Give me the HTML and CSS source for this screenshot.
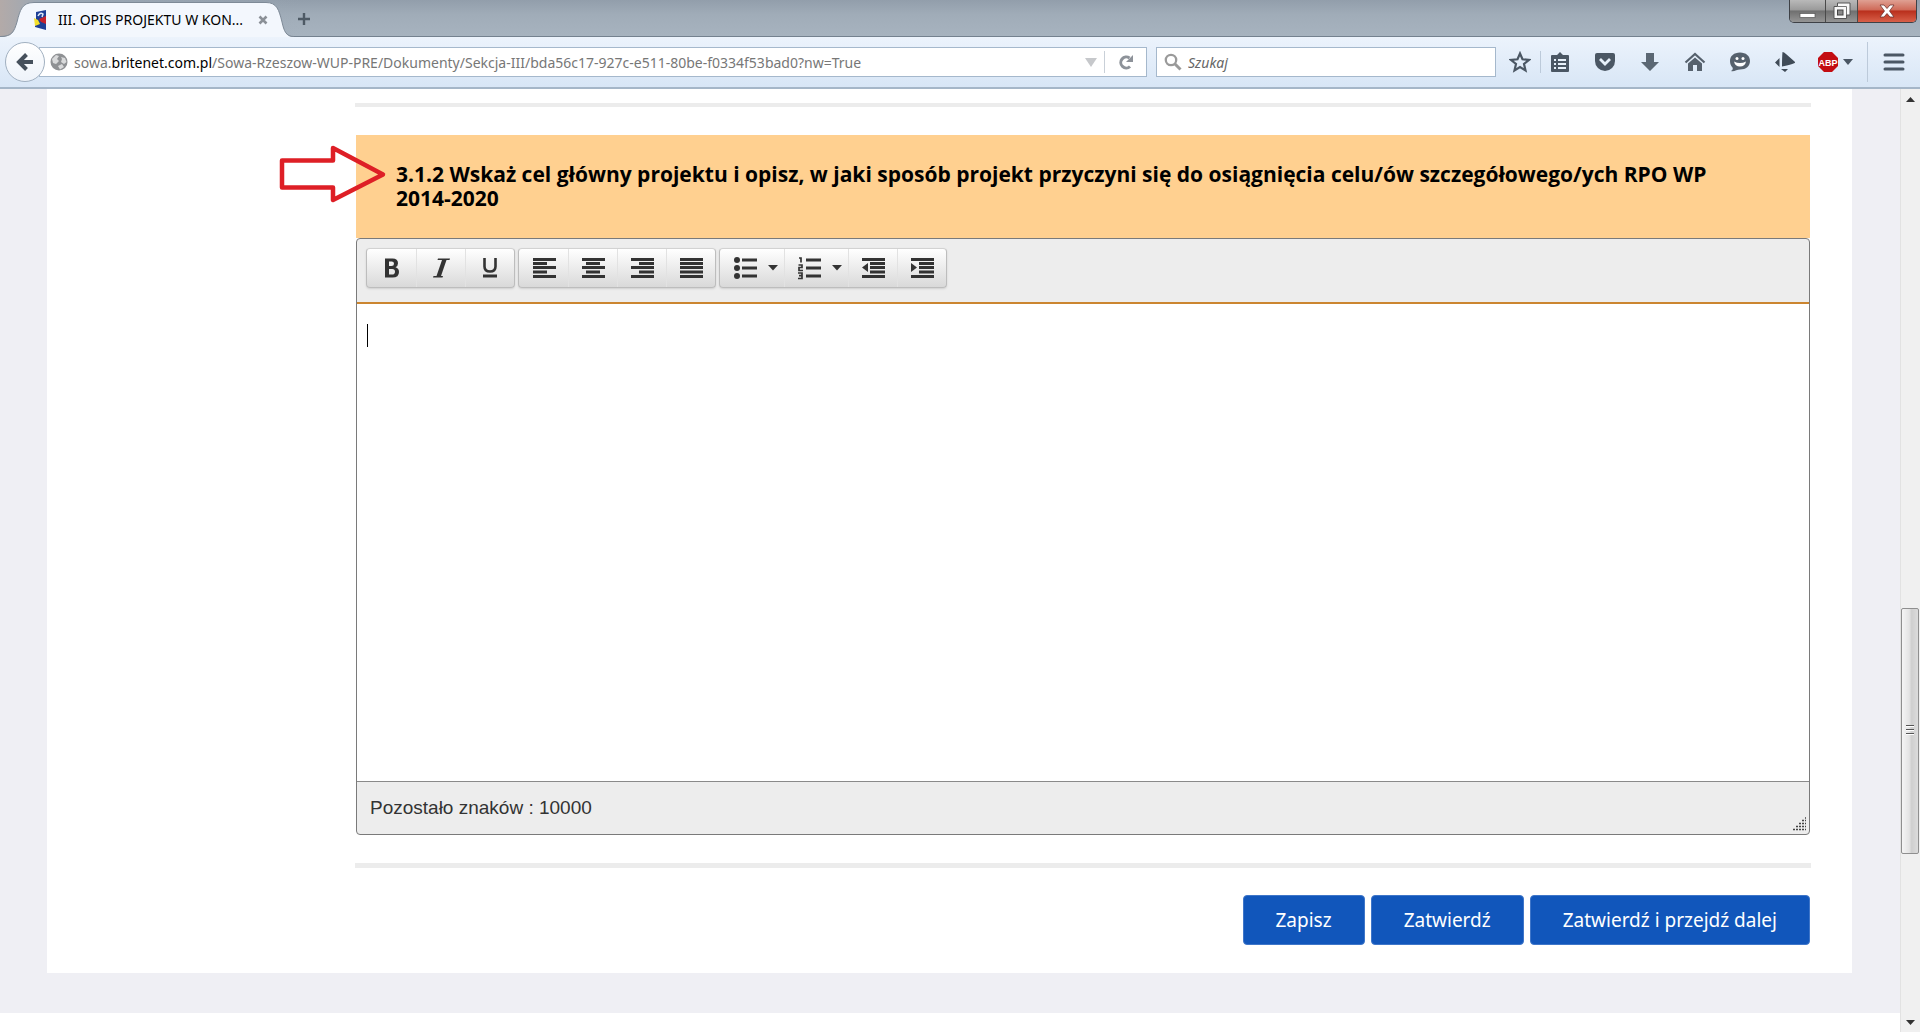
FILE: index.html
```html
<!DOCTYPE html>
<html lang="pl">
<head>
<meta charset="utf-8">
<title>III. OPIS PROJEKTU W KONTEKŚCIE</title>
<link rel="stylesheet" href="styles.css">
</head>
<body>
<header class="browser">
  <div class="titlebar">
    <div class="tab">
      <svg class="tab-shape" viewBox="0 0 286 37" aria-hidden="true"><path class="tab-fill" d="M0 37C12 37 14 32 17 22C20 10 22 2.500 34 2.500H266C277 2.500 279 10 282 22C284 31 286 37 294 37Z"/><path class="tab-line" d="M0 36.500C12 36.500 14 32 17 22C20 10 22 2.500 34 2.500H266C277 2.500 279 10 282 22C284 31 286 36.500 294 36.500"/></svg>
      <svg class="favicon" viewBox="0 0 12 20" aria-hidden="true"><path fill="#1d3f96" d="M2 2L12 0V20L1 17V11L2 9Z"/><path fill="#f4e02c" d="M0 8L4 10L6 14L1 16Z"/><path fill="#c5222c" d="M5 9L12 6V14L7 12Z"/><path d="M4 6Q6 2 9 4L8 7" fill="none" stroke="#dfe8f8" stroke-width="1.500"/></svg>
      <span class="tab-title">III. OPIS PROJEKTU W KON...</span>
      <button class="bare tab-close" aria-label="Zamknij kartę"><svg width="10" height="10" viewBox="0 0 10 10"><path d="M1.500 1.500L8.500 8.500M8.500 1.500L1.500 8.500" stroke="#8b9097" stroke-width="2.600"/></svg></button>
    </div>
    <button class="bare new-tab" aria-label="Nowa karta"><svg width="14" height="14" viewBox="0 0 14 14"><path d="M7 1V13M1 7H13" stroke="#4e5a65" stroke-width="2.400"/></svg></button>
    <div class="window-controls">
      <button class="win win-min" aria-label="Minimalizuj"><svg width="18" height="20" viewBox="0 0 18 20"><rect x="1" y="12.500" width="15" height="4" fill="#fff" stroke="#555" stroke-width=".7"/></svg></button>
      <button class="win win-max" aria-label="Przywróć"><svg width="18" height="18" viewBox="0 0 18 18"><path d="M4.500 1H17V13H13.500V16.500H1V4.500H4.500Z" fill="#f8f8f8" stroke="#555"/><path d="M5 4.500H13.500V13" fill="none" stroke="#777"/><rect x="4.500" y="8" width="5.500" height="5" fill="#8a8a8a" stroke="#444"/></svg></button>
      <button class="win win-close" aria-label="Zamknij"><svg width="16" height="14" viewBox="0 0 16 14"><path d="M1 1H5L8 4.500L11 1H15L10.500 7L15 13H11L8 9.500L5 13H1L5.500 7Z" fill="#fff" stroke="#6d3430" stroke-width=".8"/></svg></button>
    </div>
  </div>
  <div class="navbar">
    <button class="back" aria-label="Wstecz"><svg width="20" height="20" viewBox="0 0 20 20"><path d="M11.500 2.500L4 10L11.500 17.500M4.500 10H18" fill="none" stroke="#46505c" stroke-width="4"/></svg></button>
    <div class="urlbar">
      <svg width="18" height="18" viewBox="0 0 18 18" aria-hidden="true"><circle cx="9" cy="9" r="8.500" fill="#8f9194"/><path fill="#d9dadb" d="M2 6L6 2L9 3L7 6L9 8L6 11L3 10ZM11 4L15 5L16.500 9L14 11L11 9L12 6ZM8 13L12 11L14 14L10 16.500Z"/></svg>
      <a class="url" href="#">sowa.<b>britenet.com.pl</b>/Sowa-Rzeszow-WUP-PRE/Dokumenty/Sekcja-III/bda56c17-927c-e511-80be-f0334f53bad0?nw=True</a>
      <button class="bare history" aria-label="Historia"><svg width="12" height="9" viewBox="0 0 12 9"><path d="M0 0H12L6 9Z" fill="#c6c8cb"/></svg></button>
      <button class="bare reload" aria-label="Odśwież"><svg width="16" height="16" viewBox="0 0 16 16"><path d="M12 12.500A5.500 5.500 0 1 1 11.500 4" fill="none" stroke="#8d9299" stroke-width="3"/><path d="M15 1V8H8Z" fill="#8d9299"/></svg></button>
    </div>
    <label class="search">
      <svg width="18" height="18" viewBox="0 0 18 18" aria-hidden="true"><circle cx="7" cy="7" r="5.200" fill="none" stroke="#9a9a9a" stroke-width="2.300"/><path d="M11 11L16.500 16.500" stroke="#9a9a9a" stroke-width="3"/></svg>
      <input type="text" placeholder="Szukaj" aria-label="Szukaj">
    </label>
    <button class="tool star" aria-label="Zakładka"><svg width="22" height="22" viewBox="0 0 22 22"><path d="M11 2.500L13.500 8.300L20 9L15 13L16.500 19.500L11 16L5.500 19.500L7 13L2 9L8.500 8.300Z" fill="none" stroke="#4b5764" stroke-width="2.200"/></svg></button>
    <button class="tool list" aria-label="Zakładki"><svg width="20" height="20" viewBox="0 0 20 20"><path fill="#4b5764" d="M1 4Q1 3 2 3H7L10 0L13 3H18Q19 3 19 4V19Q19 20 18 20H2Q1 20 1 19Z"/><path d="M4 8H6M8 8H16M4 12H6M8 12H16M4 16H6M8 16H16" stroke="#e8f1fa" stroke-width="2"/></svg></button>
    <button class="tool" aria-label="Pocket"><svg width="22" height="20" viewBox="0 0 22 20"><path fill="#4b5764" d="M1 3Q1 1 3 1H19Q21 1 21 3V9A10 10 0 0 1 1 9Z"/><path d="M6 7L11 12L16 7" fill="none" stroke="#e8f1fa" stroke-width="2.800"/></svg></button>
    <button class="tool" aria-label="Pobrane"><svg width="20" height="20" viewBox="0 0 20 20"><path fill="#5b6773" d="M6 1H14V10H19L10 19L1 10H6Z"/></svg></button>
    <button class="tool" aria-label="Strona startowa"><svg width="22" height="20" viewBox="0 0 22 20"><path d="M1.500 10.500L11 2L20.500 10.500" fill="none" stroke="#56616d" stroke-width="2.200"/><path fill="#56616d" d="M4 11.500L11 5.500L18 11.500V19H13V13H9V19H4Z"/></svg></button>
    <button class="tool" aria-label="Czat"><svg width="22" height="20" viewBox="0 0 22 20"><path fill="#56616d" d="M11 0.500C17 0.500 21 4 21 9S17 17.500 11 17.500C8 17.500 5 20 2 19C4 18 4 16.500 3.500 15.500C2 14 1 12 1 9C1 4 5 0.500 11 0.500Z"/><circle cx="8" cy="6.500" r="1.500" fill="#fff"/><circle cx="14" cy="6.500" r="1.500" fill="#fff"/><path d="M5 9.500Q11 12.500 17 9.500Q16 14.500 11 14.500T5 9.500Z" fill="#fff"/></svg></button>
    <button class="tool" aria-label="Dodatek"><svg width="22" height="20" viewBox="0 0 22 20"><path fill="#404b57" d="M8.500 0Q10 0 12 2L20.500 9.500Q22 11 19.500 11.500Q16 13 8 14.500Q8 5 8.500 0ZM5.500 6V15L1 10.500ZM7 17H14L11 20Z"/></svg></button>
    <button class="tool abp" aria-label="Adblock Plus"><svg width="22" height="22" viewBox="0 0 22 22"><path fill="#c30d12" d="M7 1H15L21 7V15L15 21H7L1 15V7Z"/><text x="11" y="15" text-anchor="middle" class="abp-text">ABP</text></svg><svg width="10" height="6" viewBox="0 0 10 6"><path fill="#4b5764" d="M0 0H10L5 6Z"/></svg></button>
    <button class="tool menu" aria-label="Menu"><svg width="22" height="18" viewBox="0 0 22 18"><path d="M2 2H20M2 9H20M2 16H20" stroke="#4b5764" stroke-width="3" stroke-linecap="round"/></svg></button>
  </div>
</header>
<div class="viewport">
  <main class="page">
    <section class="panel">
      <hr class="rule">
      <div class="question">
        <h3 class="heading">3.1.2 Wskaż cel główny projektu i opisz, w jaki sposób projekt przyczyni się do osiągnięcia celu/ów szczegółowego/ych RPO WP 2014-2020</h3>
        <svg class="pointer" width="110" height="64" viewBox="0 0 110 64" aria-hidden="true"><path d="M3 18.500H54V6L104 32.500L54 58V45.500H3Z" fill="none" stroke="#de1f26" stroke-width="4.500" stroke-linejoin="round"/></svg>
      </div>
      <div class="editor">
        <div class="toolbar">
          <div class="group">
            <button aria-label="Pogrubienie"><svg width="24" height="24" viewBox="0 0 24 24"><path fill="#333" fill-rule="evenodd" d="M5 2.500H12.500Q18 2.500 18 7.300Q18 10.200 15.500 11.300Q19 12.300 19 16Q19 21.500 12.500 21.500H5ZM9 5.500V10H11.500Q14 10 14 7.700T11.500 5.500ZM9 13V18.500H12Q15 18.500 15 15.700T12 13Z"/></svg></button>
            <button aria-label="Kursywa"><svg width="24" height="24" viewBox="0 0 24 24"><path fill="#333" d="M9 2.500H21L20.500 4H17.500L12 20H14L13.500 21.500H4L4.500 20H7.500L13 4H8.500Z"/></svg></button>
            <button aria-label="Podkreślenie"><svg width="24" height="24" viewBox="0 0 24 24"><path d="M6.500 2V10.500Q6.500 15.500 12 15.500T17.500 10.500V2" fill="none" stroke="#333" stroke-width="2.600"/><path fill="#333" d="M5 18.500H19V21.500H5Z"/></svg></button>
          </div>
          <div class="group">
            <button aria-label="Do lewej"><svg width="24" height="24" viewBox="0 0 24 24"><path d="M1 3.500H24M1 7.500H15M1 11.500H24M1 16H15M1 20.500H24" stroke="#333" stroke-width="2.800"/></svg></button>
            <button aria-label="Wyśrodkuj"><svg width="24" height="24" viewBox="0 0 24 24"><path d="M1 3.500H24M5 7.500H19M1 11.500H24M5 16H19M1 20.500H24" stroke="#333" stroke-width="2.800"/></svg></button>
            <button aria-label="Do prawej"><svg width="24" height="24" viewBox="0 0 24 24"><path d="M1 3.500H24M9 7.500H24M1 11.500H24M9 16H24M1 20.500H24" stroke="#333" stroke-width="2.800"/></svg></button>
            <button aria-label="Wyjustuj"><svg width="24" height="24" viewBox="0 0 24 24"><path d="M1 3.500H24M1 7.500H24M1 11.500H24M1 16H24M1 20.500H24" stroke="#333" stroke-width="2.800"/></svg></button>
          </div>
          <div class="group">
            <button class="split" aria-label="Lista wypunktowana"><svg width="24" height="24" viewBox="0 0 24 24"><g fill="#333"><circle cx="4" cy="4" r="3"/><circle cx="4" cy="12" r="3"/><circle cx="4" cy="20" r="3"/></g><path d="M9 4H24M9 12H24M9 20H24" stroke="#333" stroke-width="3"/></svg><svg width="10" height="6" viewBox="0 0 10 6"><path fill="#333" d="M0 0H10L5 5.500Z"/></svg></button>
            <button class="split" aria-label="Lista numerowana"><svg width="24" height="24" viewBox="0 0 24 24"><path d="M9 4H24M9 12H24M9 20H24" stroke="#333" stroke-width="3"/><path d="M2 2H4V6.500M1.500 9H5V11.500H2V14.500H6M1 17H5V22.500H1M2 19.700H5" fill="none" stroke="#333" stroke-width="1.700"/></svg><svg width="10" height="6" viewBox="0 0 10 6"><path fill="#333" d="M0 0H10L5 5.500Z"/></svg></button>
            <button aria-label="Zmniejsz wcięcie"><svg width="24" height="24" viewBox="0 0 24 24"><path d="M1 3.500H24M9 7.500H24M9 11.500H24M9 16H24M1 20.500H24" stroke="#333" stroke-width="2.800"/><path fill="#333" d="M7 7V16L1 11.500Z"/></svg></button>
            <button aria-label="Zwiększ wcięcie"><svg width="24" height="24" viewBox="0 0 24 24"><path d="M1 3.500H24M9 7.500H24M9 11.500H24M9 16H24M1 20.500H24" stroke="#333" stroke-width="2.800"/><path fill="#333" d="M1 7V16L7 11.500Z"/></svg></button>
          </div>
        </div>
        <div class="writing">
          <textarea class="text" aria-label="Cel główny projektu"></textarea>
          <span class="caret"></span>
        </div>
        <div class="status">
          <span>Pozostało znaków : 10000</span>
          <svg class="grip" width="14" height="14" viewBox="0 0 14 14" aria-hidden="true"><path d="M1 12.500H14M4 9.500H14M7 6.500H14M10 3.500H14M13 1H14" stroke="#444" stroke-width="1.500" stroke-dasharray="2 1"/></svg>
        </div>
      </div>
      <hr class="rule rule-bottom">
      <div class="actions">
        <button class="action">Zapisz</button>
        <button class="action">Zatwierdź</button>
        <button class="action">Zatwierdź i przejdź dalej</button>
      </div>
    </section>
  </main>
  <div class="scrollbar" aria-hidden="true">
    <div class="arrow"><svg width="9" height="5" viewBox="0 0 9 5"><path fill="#333" d="M0 5L4.500 0L9 5Z"/></svg></div>
    <div class="track-above"></div>
    <div class="thumb"></div>
    <div class="track-below"></div>
    <div class="arrow"><svg width="9" height="5" viewBox="0 0 9 5"><path fill="#333" d="M0 0H9L4.500 5Z"/></svg></div>
  </div>
</div>
</body>
</html>
```
FILE: styles.css
```css
* { box-sizing: border-box; }
body {
  margin: 0;
  min-height: 100vh;
  display: flex;
  flex-direction: column;
  background: #fff;
  font-family: "Noto Sans", "Open Sans", sans-serif;
  color: #000;
}
button { font-family: inherit; margin: 0; padding: 0; }
svg { display: block; flex: none; }

.titlebar {
  height: 37px;
  display: flex;
  align-items: flex-start;
  background: linear-gradient(90deg, #b3aaa8 0, #9ba8b5 40px, transparent 300px),
    linear-gradient(#929eab, #a0acb8 40%, #a7b3bf);
  border-bottom: 1px solid #74818f;
}
.bare { background: none; border: 0; display: flex; align-items: center; justify-content: center; }
.tab {
  position: relative;
  width: 286px;
  height: 37px;
  display: flex;
  align-items: center;
  padding: 2px 13px 0 34px;
}
.tab-shape { position: absolute; left: 0; top: 0; width: 286px; height: 37px; overflow: visible; }
.tab-fill { fill: #f3f7fd; }
.tab-line { fill: none; stroke: #7e8a97; }
.favicon { position: relative; width: 12px; height: 20px; }
.tab-title {
  position: relative;
  flex: 1;
  margin-left: 12px;
  font-size: 14px;
  white-space: nowrap;
}
.tab-close { position: relative; width: 20px; height: 20px; }
.new-tab { width: 36px; height: 37px; }
.window-controls {
  display: flex;
  margin: 0 3px 0 auto;
  border: 1px solid #3e4146;
  border-top: 0;
  border-radius: 0 0 5px 5px;
  overflow: hidden;
}
.win {
  height: 22px;
  border: 0;
  display: flex;
  align-items: center;
  justify-content: center;
  background: linear-gradient(#b9b9b9, #9a9a9a 45%, #6f6f6f 50%, #959595);
}
.win-min { width: 35px; }
.win-max { width: 33px; border-left: 1px solid #4a4a4a; border-right: 1px solid #4a4a4a; }
.win-close { width: 58px; background: linear-gradient(#dfa093, #cf6a58 45%, #b92f1c 50%, #d85f48); }

.navbar {
  height: 52px;
  display: flex;
  align-items: center;
  background: linear-gradient(#ecf3fc, #d8e6f6);
  border-bottom: 2px solid #a5b6c8;
}
.back {
  position: relative;
  z-index: 1;
  flex: none;
  width: 40px;
  height: 40px;
  margin-left: 5px;
  border: 1px solid #a1b0c0;
  border-radius: 50%;
  background: linear-gradient(#fff, #eef3fa);
  display: flex;
  align-items: center;
  justify-content: center;
}
.urlbar {
  flex: 1;
  height: 30px;
  display: flex;
  align-items: center;
  margin-left: -6px;
  padding-left: 10px;
  background: #fff;
  border: 1px solid #a5b8cc;
}
.url {
  flex: 1;
  margin-left: 6px;
  color: #777;
  font-size: 14px;
  text-decoration: none;
  white-space: nowrap;
}
.url b { font-weight: 400; color: #000; }
.history { width: 28px; height: 22px; border-right: 1px solid #c9d0d8; }
.reload { width: 41px; height: 22px; }
.search {
  flex: none;
  width: 340px;
  height: 30px;
  display: flex;
  align-items: center;
  margin-left: 9px;
  padding-left: 7px;
  background: #fff;
  border: 1px solid #a5b8cc;
}
.search input {
  flex: 1;
  min-width: 0;
  margin-left: 6px;
  padding: 0;
  border: 0;
  outline: 0;
  font: italic 14px "Noto Sans", sans-serif;
}
.search input::placeholder { color: #666; }
.tool {
  flex: none;
  width: 45px;
  height: 40px;
  border: 0;
  background: none;
  display: flex;
  align-items: center;
  justify-content: center;
}
.star { width: 41px; height: 22px; margin-left: 4px; border-right: 1px solid #bccada; }
.list { width: 38px; margin-right: 3px; }
.abp { width: 60px; gap: 4px; padding-right: 4px; }
.abp-text { font: bold 9px "Liberation Sans", sans-serif; fill: #fff; }
.menu { width: 53px; border-left: 1px solid #bccada; }

.viewport { flex: 1; display: flex; }
.page { flex: 1; padding: 0 48px 40px 47px; align-self: flex-start; background: #efeff4; }
.panel { background: #fff; padding: 14px 41px 28px 308px; }
.rule { height: 4px; margin: 0; border: 0; background: #ececec; }
.rule-bottom { height: 5px; margin-top: 28px; }
.question {
  position: relative;
  margin: 28px 1px 0;
  min-height: 103px;
  padding: 27px 80px 28px 40px;
  background: #ffd090;
}
.heading {
  margin: 0;
  font: 700 21px/24px "Open Sans", "Noto Sans", sans-serif;
}
.pointer { position: absolute; left: -77px; top: 7px; }
.editor {
  margin: 0 1px;
  border: 1px solid #7a7a7a;
  border-radius: 4px;
  background: #ededed;
}
.toolbar {
  height: 65px;
  display: flex;
  align-items: flex-start;
  gap: 3px;
  padding: 9px;
  border-bottom: 2px solid #cb8530;
}
.group {
  height: 40px;
  display: flex;
  border: 1px solid #bdbdbd;
  border-top-color: #d2d2d2;
  border-radius: 4px;
  background: linear-gradient(#fff, #d9d9d9);
  box-shadow: 0 1px 2px #d0d0d0;
}
.group button {
  width: 49px;
  border: 0;
  background: none;
  display: flex;
  align-items: center;
  justify-content: center;
}
.group button + button { border-left: 1px solid #e2e2e2; }
.group .split { width: 64px; gap: 11px; padding-left: 6px; }
.writing { position: relative; background: #fff; }
.text {
  display: block;
  width: 100%;
  height: 477px;
  padding: 20px 10px;
  border: 0;
  outline: 0;
  resize: none;
  font: 19px/24px "Liberation Sans", Arial, sans-serif;
}
.caret { position: absolute; left: 10px; top: 20px; width: 1px; height: 23px; background: #000; }
.status {
  height: 53px;
  display: flex;
  align-items: center;
  justify-content: space-between;
  padding: 0 3px 0 13px;
  border-top: 1px solid #8a8a8a;
  font: 19px "Liberation Sans", Arial, sans-serif;
  color: #333;
}
.grip { align-self: flex-end; margin-bottom: 3px; }
.actions { display: flex; justify-content: flex-end; gap: 6px; margin: 27px 1px 0; }
.action {
  height: 50px;
  padding: 0 32px;
  border: 1px solid #3f76c9;
  border-radius: 4px;
  background: #1156bb;
  color: #fff;
  font-size: 19px;
  white-space: nowrap;
}

.scrollbar {
  flex: none;
  width: 20px;
  display: flex;
  flex-direction: column;
  background: #f0f0f0;
  border-left: 1px solid #e2e2e2;
}
.arrow { height: 20px; display: flex; align-items: center; justify-content: center; }
.track-above { flex: 500; }
.track-below { flex: 158; }
.thumb {
  flex: 245;
  width: 18px;
  border: 1px solid #8f8f8f;
  border-radius: 2px;
  background:
    repeating-linear-gradient(#555 0 1px, #fff 1px 2px, transparent 2px 4px) center / 8px 12px no-repeat,
    linear-gradient(90deg, #f5f5f5, #e4e4e4 45%, #cfcfcf 60%, #dcdcdc);
}
```
